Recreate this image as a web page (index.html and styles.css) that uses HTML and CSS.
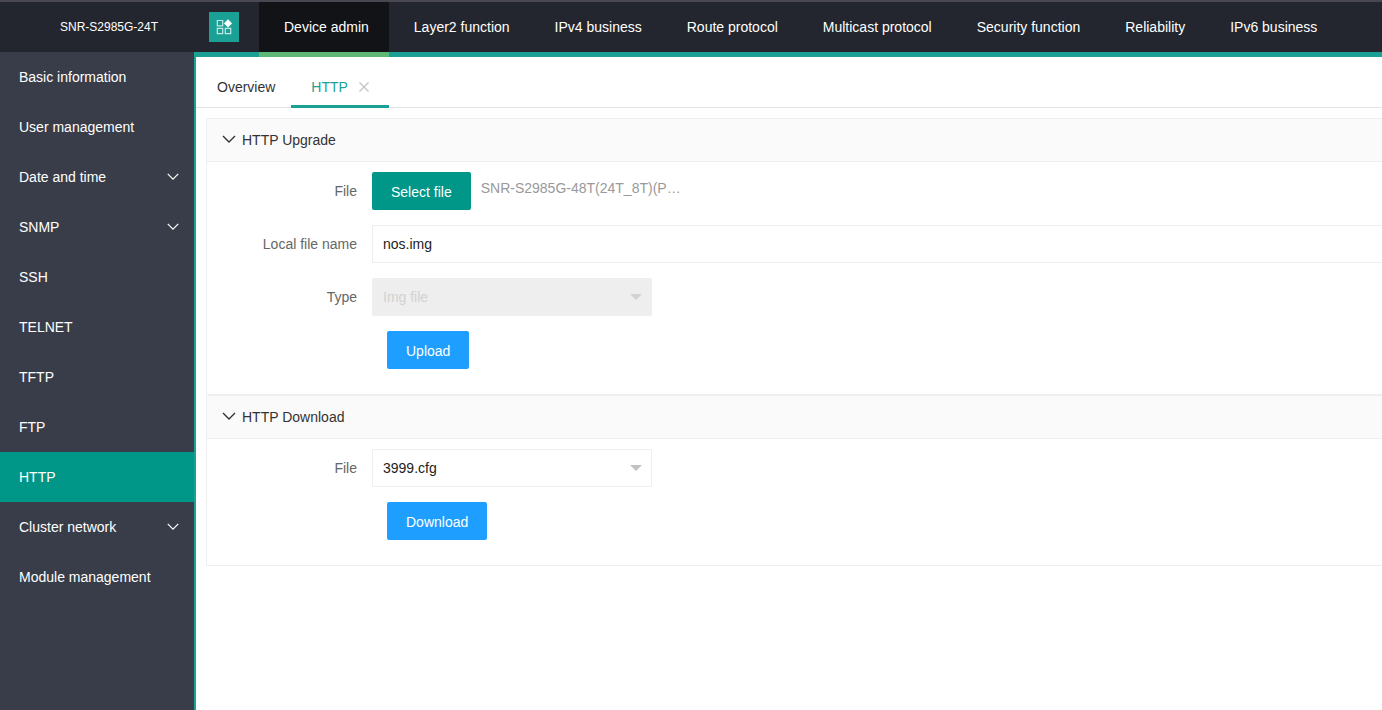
FILE: index.html
```html
<!DOCTYPE html>
<html lang="en">
<head>
<meta charset="utf-8">
<title>SNR-S2985G-24T</title>
<link rel="stylesheet" href="styles.css">
</head>
<body>
<svg class="symbols" aria-hidden="true">
  <symbol id="chevron" viewBox="0 0 14 8"><path d="M1 1l6 6 6-6" fill="none" stroke="currentColor" stroke-width="1.400"/></symbol>
</svg>
<header class="topbar">
  <div class="device">SNR-S2985G-24T</div>
  <button class="apps" type="button" aria-label="Toggle menu">
    <svg width="16" height="16" viewBox="0 0 16 16" fill="none" stroke="#fff" stroke-opacity=".75" stroke-width="1.200"><path d="M1.300 1.500h5.400v5.400H1.300zM1.300 9.300h5.400v5.400H1.300zM9.300 9.300h5.400v5.400H9.300z"/><path d="M12 .6L15.800 4.400 12 8.200 8.200 4.400z" fill="#fff" stroke="#fff" stroke-width=".6" stroke-opacity="1" stroke-linejoin="round"/></svg>
  </button>
  <nav class="topnav">
    <a class="topnav-item active" href="#">Device admin</a>
    <a class="topnav-item" href="#">Layer2 function</a>
    <a class="topnav-item" href="#">IPv4 business</a>
    <a class="topnav-item" href="#">Route protocol</a>
    <a class="topnav-item" href="#">Multicast protocol</a>
    <a class="topnav-item" href="#">Security function</a>
    <a class="topnav-item" href="#">Reliability</a>
    <a class="topnav-item" href="#">IPv6 business</a>
  </nav>
</header>
<div class="layout">
  <nav class="sidebar">
    <a class="side-item" href="#">Basic information</a>
    <a class="side-item" href="#">User management</a>
    <a class="side-item" href="#">Date and time<svg class="side-arrow"><use href="#chevron"/></svg></a>
    <a class="side-item" href="#">SNMP<svg class="side-arrow"><use href="#chevron"/></svg></a>
    <a class="side-item" href="#">SSH</a>
    <a class="side-item" href="#">TELNET</a>
    <a class="side-item" href="#">TFTP</a>
    <a class="side-item" href="#">FTP</a>
    <a class="side-item active" href="#">HTTP</a>
    <a class="side-item" href="#">Cluster network<svg class="side-arrow"><use href="#chevron"/></svg></a>
    <a class="side-item" href="#">Module management</a>
  </nav>
  <main class="main">
    <div class="tabs">
      <a class="tab" href="#">Overview</a>
      <div class="tab active"><a href="#">HTTP</a><button class="tab-close" type="button" aria-label="Close tab"><svg width="10" height="10" viewBox="0 0 10 10"><path d="M.5.5l9 9M9.500.5l-9 9" stroke="currentColor" stroke-width="1.200"/></svg></button></div>
    </div>
    <div class="content">
      <section class="panel">
        <h2 class="panel-title"><svg class="panel-arrow"><use href="#chevron"/></svg>HTTP Upgrade</h2>
        <form class="panel-body">
          <div class="row">
            <label class="label" for="pick">File</label>
            <button class="btn btn-green" id="pick" type="button">Select file</button>
            <span class="filename">SNR-S2985G-48T(24T_8T)(P…</span>
          </div>
          <div class="row">
            <label class="label" for="local">Local file name</label>
            <input class="field" id="local" type="text" value="nos.img">
          </div>
          <div class="row">
            <label class="label" for="type">Type</label>
            <div class="select"><select class="field" id="type" disabled><option>Img file</option></select></div>
          </div>
          <div class="row actions"><button class="btn btn-blue" type="button">Upload</button></div>
        </form>
      </section>
      <section class="panel">
        <h2 class="panel-title"><svg class="panel-arrow"><use href="#chevron"/></svg>HTTP Download</h2>
        <form class="panel-body">
          <div class="row">
            <label class="label" for="cfg">File</label>
            <div class="select"><select class="field" id="cfg"><option>3999.cfg</option></select></div>
          </div>
          <div class="row actions"><button class="btn btn-blue" type="button">Download</button></div>
        </form>
      </section>
    </div>
  </main>
</div>
</body>
</html>
```
FILE: styles.css
```css
* { box-sizing: border-box; }
body {
  margin: 0;
  min-height: 100vh;
  display: flex;
  flex-direction: column;
  font: 14px/24px "Liberation Sans", Arial, sans-serif;
  color: #333;
  background: #fff;
}
a { color: inherit; text-decoration: none; }
button, input, select { font: inherit; margin: 0; }
.symbols { position: absolute; width: 0; height: 0; }

.topbar {
  display: flex;
  align-items: flex-start;
  border-top: 2px solid #484752;
  background: #23262e;
  color: #fff;
  line-height: 50px;
}
.device {
  width: 194px;
  flex: none;
  padding-left: 60px;
  font-size: 12px;
}
.apps {
  display: flex;
  align-items: center;
  justify-content: center;
  flex: none;
  width: 30px;
  height: 30px;
  margin: 10px 20px 0 15px;
  padding: 0;
  border: 0;
  background: #1aa094;
}
.topnav { display: flex; flex: 1; }
.topnav-item {
  padding: 0 20px 0 25px;
  white-space: nowrap;
}
.topnav-item.active {
  position: relative;
  background: #121317;
}
.topnav-item.active::after {
  content: "";
  position: absolute;
  left: 0;
  right: 0;
  top: 100%;
  height: 5px;
  background: #5fb878;
}

.layout { display: flex; flex: 1; }
.sidebar {
  width: 194px;
  flex: none;
  background: #393d49;
  color: #fff;
}
.side-item {
  display: flex;
  align-items: center;
  justify-content: space-between;
  height: 50px;
  padding: 0 14px 0 19px;
}
.side-item.active { background: #009688; }
.side-arrow { width: 14px; height: 7px; margin-bottom: 2px; }

.main {
  flex: 1;
  min-width: 0;
  border-top: 5px solid #1aa094;
  border-left: 2px solid #1aa094;
}
.tabs {
  display: flex;
  height: 51px;
  padding-top: 10px;
  border-bottom: 1px solid #e2e2e2;
  line-height: 40px;
}
.tab { padding: 0 16px 0 21px; }
.tab.active {
  display: flex;
  align-items: center;
  height: 41px;
  padding: 0 20px;
  border-bottom: 3px solid #1aa094;
  color: #1aa094;
}
.tab.active a { padding-top: 2px; }
.tab-close {
  display: flex;
  margin: 2px 0 0 11px;
  padding: 0;
  border: 0;
  background: none;
  color: #c2c2c2;
}

.content { padding: 10px 0 0 10px; }
.panel {
  border: 1px solid #eee;
  border-right: 0;
  border-radius: 2px 0 0 2px;
}
.panel-title {
  display: flex;
  align-items: center;
  height: 43px;
  margin: 0;
  padding-left: 15px;
  border-bottom: 1px solid #eee;
  background: #fafafa;
  font-size: 14px;
  font-weight: 400;
}
.panel-arrow { width: 14px; height: 8px; margin: 0 6px 2px 0; }
.panel-body { padding: 10px 0; }
.row {
  display: flex;
  align-items: flex-start;
  margin-bottom: 15px;
}
.actions { padding-left: 180px; }
.label {
  width: 165px;
  flex: none;
  padding: 7px 15px 7px 0;
  color: #666;
  text-align: right;
}
.btn {
  height: 38px;
  padding: 2px 19px 0;
  border: 0;
  border-radius: 2px;
  color: #fff;
}
.btn-green { background: #009688; }
.btn-blue { background: #1e9fff; }
.filename {
  margin-left: 10px;
  padding-top: 4px;
  color: #999;
  white-space: nowrap;
}
.field {
  width: 100%;
  height: 38px;
  padding: 0 10px;
  border: 1px solid #eee;
  border-radius: 2px;
  background: #fff;
  color: #222;
}
input.field { flex: 1; border-right: 0; border-radius: 2px 0 0 2px; }
.select { position: relative; width: 280px; }
.select .field { appearance: none; opacity: 1; }
.select .field:disabled { background: #eee; color: #d2d2d2; }
.select::after {
  content: "";
  position: absolute;
  right: 10px;
  top: 16px;
  border: 6px solid transparent;
  border-top-color: #c2c2c2;
  border-bottom: 0;
  pointer-events: none;
}
.select:has(:disabled)::after { border-top-color: #d2d2d2; }
```
